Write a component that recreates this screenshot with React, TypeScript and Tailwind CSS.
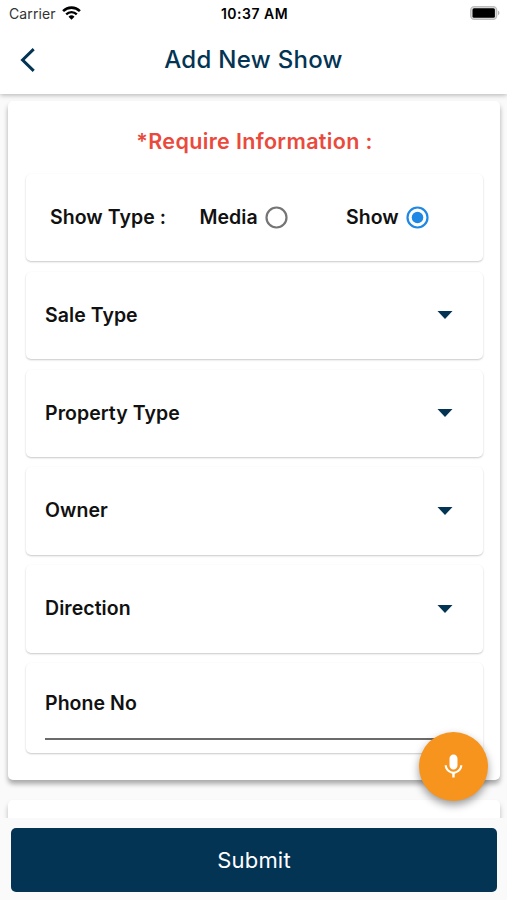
import { useState } from "react";

const dropdowns = ["Sale Type", "Property Type", "Owner", "Direction"];

const fieldCard = "rounded-[5px] bg-white shadow-[0_1px_2px_rgba(0,0,0,0.22)]";

function StatusBar() {
    return (
        <div className="grid h-[26px] grid-cols-3 items-center pl-[9px] pr-[7px] text-black">
            <div className="flex items-center gap-[6px]">
                <span className="text-[14px] tracking-[0.1px] text-[#333]">Carrier</span>
                <svg width="19" height="14" viewBox="0 0 19 14" fill="none">
                    <path d="M1.1 5.1a12 12 0 0 1 16.8 0" stroke="#000" strokeWidth="2.6" />
                    <path d="M4.2 8.4a7.5 7.5 0 0 1 10.6 0" stroke="#000" strokeWidth="2.3" />
                    <path d="M9.5 13.8 6.5 10.7a4.3 4.3 0 0 1 6 0z" fill="#000" />
                </svg>
            </div>
            <span className="text-center text-[14px] font-semibold tracking-[0.5px]">10:37 AM</span>
            <svg className="justify-self-end" width="30" height="14" viewBox="0 0 30 14">
                <rect x="0.7" y="0.7" width="26" height="12.6" rx="3.5" fill="#ddd" stroke="#bdbdbd" strokeWidth="1.3" />
                <rect x="2.5" y="2.3" width="22.4" height="9.4" rx="1.5" fill="#000" />
                <path d="M28 4.8c1.9.6 1.9 3.8 0 4.4z" fill="#b5b5b5" />
            </svg>
        </div>
    );
}

function Radio({ label, checked, onChange }: { label: string; checked: boolean; onChange: () => void }) {
    return (
        <button role="radio" aria-checked={checked} onClick={onChange} className="flex items-center gap-[7px]">
            <span>{label}</span>
            <svg width="23" height="23" viewBox="0 0 23 23">
                <circle cx="11.5" cy="11.5" r="10" fill="none" stroke={checked ? "#1e88e5" : "#757575"} strokeWidth="2.2" />
                {checked && <circle cx="11.5" cy="11.5" r="5.8" fill="#1e88e5" />}
            </svg>
        </button>
    );
}

export default function App() {
    const [showType, setShowType] = useState("Show");

    return (
        <div className="relative flex h-[900px] w-full flex-col overflow-hidden bg-[#fafafa] font-['Inter','Liberation_Sans',sans-serif] text-[#111]">
            <header className="z-10 h-[94px] shrink-0 bg-white shadow-[0_1px_5px_rgba(0,0,0,0.3)]">
                <StatusBar />
                <div className="grid h-[68px] grid-cols-[60px_1fr_60px] items-center">
                    <button aria-label="Back" className="pl-5">
                        <svg width="16" height="24" viewBox="0 0 16 24" fill="none">
                            <path d="M13.7 1.2 2.6 12l11.1 10.8" stroke="#033454" strokeWidth="3" />
                        </svg>
                    </button>
                    <h1 className="text-center text-[24px] font-[450] tracking-[0.3px] text-[#033454]">Add New Show</h1>
                </div>
            </header>

            <main className="flex min-h-0 flex-1 flex-col gap-5 overflow-hidden pl-2 pr-[7px] pt-[7px]">
                <section className="h-[679px] shrink-0 rounded-[5px] bg-white pl-[18px] pr-[17px] pt-6 shadow-[0_4px_5px_rgba(0,0,0,0.32)]">
                    <h2 className="text-center text-[21.5px] font-semibold leading-8 tracking-[0.35px] text-[#ea4a3c]">
                        *Require Information :
                    </h2>
                    <div className="mt-[17px] flex flex-col gap-[10.4px] text-[19.5px] font-semibold tracking-[0.05px]">
                        <div className={`${fieldCard} flex h-[87.4px] items-center pl-6`} role="radiogroup">
                            <span className="w-[149.5px]">Show Type :</span>
                            <div className="w-[146.5px]">
                                <Radio label="Media" checked={showType === "Media"} onChange={() => setShowType("Media")} />
                            </div>
                            <Radio label="Show" checked={showType === "Show"} onChange={() => setShowType("Show")} />
                        </div>
                        {dropdowns.map((label) => (
                            <button key={label} className={`${fieldCard} flex h-[87.4px] items-center justify-between pl-[19px] pr-[30px]`}>
                                <span>{label}</span>
                                <svg width="16" height="8" viewBox="0 0 16 8">
                                    <path d="M.5 0h15L8 8z" fill="#033454" />
                                </svg>
                            </button>
                        ))}
                        <div className={`${fieldCard} h-[90.5px] px-[19px] pt-[25px]`}>
                            <div className="h-[52px] border-b-2 border-[#6b6b6b] leading-[30px]">Phone No</div>
                        </div>
                    </div>
                </section>
                <section className="h-40 shrink-0 rounded-[5px] bg-white shadow-[0_4px_5px_rgba(0,0,0,0.25)]" />
            </main>

            <footer className="z-10 h-[82px] shrink-0 bg-[#fafafa] pl-[11px] pr-[10px] pb-2 pt-[10px]">
                <button className="h-full w-full rounded-[5px] bg-[#033454] text-[22px] tracking-[0.2px] text-white">Submit</button>
            </footer>

            {/* Voice input button */}
            <button
                aria-label="Voice input"
                className="absolute left-[418.5px] top-[732px] z-20 flex size-[69px] items-center justify-center rounded-full bg-[#f7941d] shadow-[0_4px_8px_rgba(0,0,0,0.4)]"
            >
                <svg width="29" height="29" viewBox="0 0 24 24" fill="#fff">
                    <path d="M12 14.5c1.95 0 3.3-1.5 3.3-3.3V5.3C15.3 3.5 13.95 2 12 2S8.7 3.5 8.7 5.3v5.9c0 1.8 1.35 3.3 3.3 3.3zm5.5-3.5c0 3-2.7 5.3-5.5 5.3S6.5 14 6.5 11H4.7c0 3.41 2.9 6.4 6.3 6.9V21h2v-3.1c3.4-.5 6.3-3.5 6.3-6.9h-1.8z" />
                </svg>
            </button>
        </div>
    );
}
